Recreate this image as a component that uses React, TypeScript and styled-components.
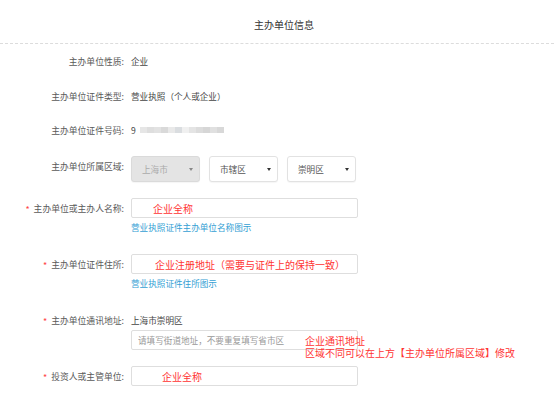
import React from 'react';
import styled, { createGlobalStyle } from 'styled-components';

const GlobalStyle = createGlobalStyle`
    html, body {
        margin: 0;
        padding: 0;
        background: #fff;
    }
    body {
        font-family: "Noto Sans CJK SC", "Noto Sans", sans-serif;
        color: #555;
    }
`;

const Page = styled.div`
    width: 554px;
    height: 397px;
    overflow: hidden;
`;

const Header = styled.div`
    height: 44px;
    display: flex;
    align-items: center;
    justify-content: center;
    padding-left: 14px;
    padding-top: 6px;
    box-sizing: border-box;
    border-bottom: 1px dashed #dcdcdc;
    font-size: 10px;
    color: #333;
`;

const Form = styled.div`
    display: flex;
    flex-direction: column;
`;

const Row = styled.div<{ $top: number }>`
    display: flex;
    align-items: flex-start;
    margin-top: ${(p) => p.$top}px;
`;

const Label = styled.div`
    width: 124px;
    flex-shrink: 0;
    display: flex;
    justify-content: flex-end;
    align-items: center;
    gap: 4px;
    height: 20px;
    font-size: 8.8px;
    color: #5a5a5a;
    white-space: nowrap;
`;

const Star = styled.span`
    color: #f44;
    font-size: 9px;
    position: relative;
    top: 1px;
`;

const Content = styled.div`
    margin-left: 7px;
    display: flex;
    flex-direction: column;
    position: relative;
`;

const Value = styled.div`
    height: 20px;
    line-height: 20px;
    font-size: 8.6px;
    color: #444;
    display: flex;
    align-items: center;
`;

const Blur = styled.div`
    display: flex;
    margin-left: 4px;
`;

const BlurCell = styled.span<{ $c: string }>`
    width: 7px;
    height: 6px;
    background: ${(p) => p.$c};
`;

const Selects = styled.div`
    display: flex;
    gap: 9px;
`;

const SelectBox = styled.div<{ $disabled?: boolean }>`
    width: 69px;
    height: 26px;
    box-sizing: border-box;
    border: 1px solid ${(p) => (p.$disabled ? '#dadada' : '#e2e2e2')};
    border-radius: 3px;
    background: ${(p) => (p.$disabled ? '#e4e4e4' : '#fff')};
    box-shadow: 0 1px 1px rgba(0, 0, 0, 0.04);
    display: flex;
    align-items: center;
    justify-content: space-between;
    padding: 0 5px 0 10px;
    font-size: 8.6px;
    color: ${(p) => (p.$disabled ? '#aaa' : '#555')};
`;

const Arrow = styled.span<{ $disabled?: boolean }>`
    width: 0;
    height: 0;
    border-left: 2px solid transparent;
    border-right: 2px solid transparent;
    border-top: 3px solid ${(p) => (p.$disabled ? '#888' : '#333')};
    margin-right: 1px;
`;

const Input = styled.input<{ $pad: number; $muted?: boolean }>`
    width: 227px;
    height: 20px;
    box-sizing: border-box;
    border: 1px solid #dedede;
    border-radius: 2px;
    outline: none;
    padding: 0 0 0 ${(p) => p.$pad}px;
    font-family: "Noto Sans CJK SC", "Noto Sans", sans-serif;
    font-size: ${(p) => (p.$muted ? '8.6px' : '10px')};
    color: #f33;
    background: #fff;

    &::placeholder {
        color: #999;
    }
`;

const Hint = styled.a`
    margin-top: 2px;
    height: 14px;
    line-height: 14px;
    font-size: 8.6px;
    color: #33a0d4;
    text-decoration: none;
`;

const Note = styled.div`
    position: absolute;
    left: 174px;
    top: 25px;
    font-size: 10px;
    line-height: 11.5px;
    color: #f33;
    white-space: nowrap;
`;

const blurColors = [
    '#e6e6e6', '#dedede', '#e2e2e2', '#d9d9d9', '#e9e9e9', '#dadde0',
    '#f0f0f0', '#e4e4e4', '#dcdcdc', '#d6d6d6', '#e0e0e0', '#d8d8d8',
];

const App: React.FC = () => {
    return (
        <Page>
            <GlobalStyle />
            <Header>主办单位信息</Header>
            <Form>
                <Row $top={7}>
                    <Label>主办单位性质:</Label>
                    <Content>
                        <Value>企业</Value>
                    </Content>
                </Row>
                <Row $top={15}>
                    <Label>主办单位证件类型:</Label>
                    <Content>
                        <Value>营业执照（个人或企业）</Value>
                    </Content>
                </Row>
                <Row $top={14}>
                    <Label>主办单位证件号码:</Label>
                    <Content>
                        <Value>
                            9
                            <Blur>
                                {blurColors.map((c, i) => (
                                    <BlurCell key={i} $c={c} />
                                ))}
                            </Blur>
                        </Value>
                    </Content>
                </Row>
                <Row $top={16}>
                    <Label>主办单位所属区域:</Label>
                    <Content>
                        <Selects>
                            <SelectBox $disabled>
                                上海市<Arrow $disabled />
                            </SelectBox>
                            <SelectBox>
                                市辖区<Arrow />
                            </SelectBox>
                            <SelectBox>
                                崇明区<Arrow />
                            </SelectBox>
                        </Selects>
                    </Content>
                </Row>
                <Row $top={16}>
                    <Label>
                        <Star>*</Star>主办单位或主办人名称:
                    </Label>
                    <Content>
                        <Input $pad={21} readOnly defaultValue="企业全称" />
                        <Hint>营业执照证件主办单位名称图示</Hint>
                    </Content>
                </Row>
                <Row $top={20}>
                    <Label>
                        <Star>*</Star>主办单位证件住所:
                    </Label>
                    <Content>
                        <Input $pad={23} readOnly defaultValue="企业注册地址（需要与证件上的保持一致）" />
                        <Hint>营业执照证件住所图示</Hint>
                    </Content>
                </Row>
                <Row $top={20}>
                    <Label>
                        <Star>*</Star>主办单位通讯地址:
                    </Label>
                    <Content>
                        <Value>上海市崇明区</Value>
                        <Input $pad={6} $muted readOnly placeholder="请填写街道地址，不要重复填写省市区" />
                        <Note>
                            企业通讯地址
                            <br />
                            区域不同可以在上方【主办单位所属区域】修改
                        </Note>
                    </Content>
                </Row>
                <Row $top={16}>
                    <Label>
                        <Star>*</Star>投资人或主管单位:
                    </Label>
                    <Content>
                        <Input $pad={30} readOnly defaultValue="企业全称" />
                    </Content>
                </Row>
            </Form>
        </Page>
    );
};

export default App;
